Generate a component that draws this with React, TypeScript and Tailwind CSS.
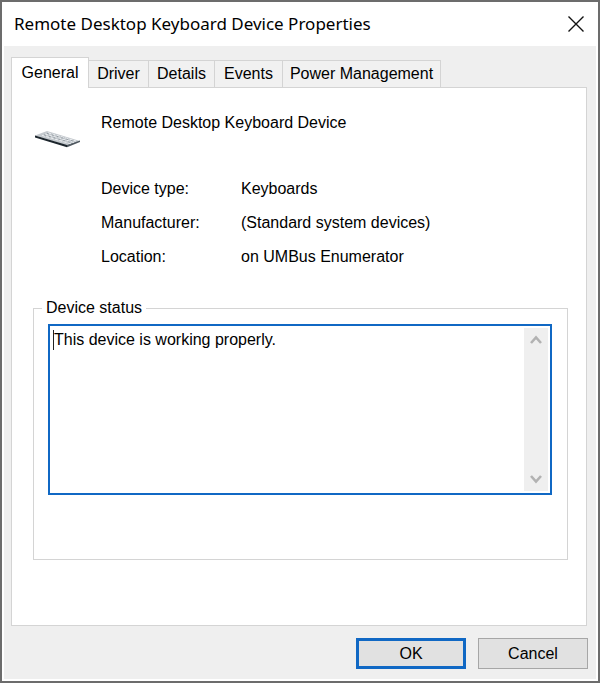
import React, { useState } from "react";

const tabs = [
  { name: "General", width: "w-[78px]" },
  { name: "Driver", width: "w-[60px]" },
  { name: "Details", width: "w-[66px]" },
  { name: "Events", width: "w-[68px]" },
  { name: "Power Management", width: "w-[158px]" },
];

const details = [
  { label: "Device type:", value: "Keyboards" },
  { label: "Manufacturer:", value: "(Standard system devices)" },
  { label: "Location:", value: "on UMBus Enumerator" },
];

function KeyboardIcon() {
  return (
    <svg width="46" height="17" viewBox="0 0 46 17" aria-hidden="true">
      <path d="M0 4.5 L12 0 L45 10 L32 14.5 Z" fill="#c4c9ce" />
      <path d="M0 4.5 L32 14 L32 16.2 L0 6.6 Z" fill="#1c252c" />
      <path d="M32 14 L45 9.5 L45 11 L32 16.2 Z" fill="#4d565e" />
      <path d="M7 4.3 L36 12.8M10 3 L39 11.5M13 1.8 L41 10" stroke="#eceff1" strokeWidth="1" strokeDasharray="3 1.5" />
      <path d="M9 3.8 L38 12.2M12 2.4 L40 10.6" stroke="#858e95" strokeWidth="0.8" strokeDasharray="2 3" />
    </svg>
  );
}

function Chevron({ down = false }: { down?: boolean }) {
  return (
    <svg width="12" height="10" viewBox="0 0 12 10" fill="none" stroke="#b2b2b2" strokeWidth="2.6" aria-hidden="true">
      <path d={down ? "M1 2 L6 7.5 L11 2" : "M1 8 L6 2.5 L11 8"} />
    </svg>
  );
}

export default function App() {
  const [active, setActive] = useState("General");

  return (
    <main className="flex min-h-screen flex-col border-2 border-[#6c6c6c] bg-white font-['Liberation_Sans',Arial,sans-serif] text-base leading-5 text-black">
      <header className="flex h-11 items-center justify-between px-3">
        <h1 className="font-['Noto_Sans','Open_Sans',sans-serif] text-[17px]">Remote Desktop Keyboard Device Properties</h1>
        <button type="button" aria-label="Close" className="flex size-5 items-center justify-center">
          <svg width="16" height="16" viewBox="0 0 16 16" stroke="#111" strokeWidth="1.4" aria-hidden="true">
            <path d="M0.5 0.5 L15.5 15.5 M15.5 0.5 L0.5 15.5" />
          </svg>
        </button>
      </header>

      <div className="flex flex-1 flex-col border-x-2 border-b-2 border-white bg-[#efefef] px-2 pb-[10px]">
        <div role="tablist" className="-mb-px ml-[-1px] flex h-[42px] items-end">
          {tabs.map((tab) => (
            <button
              key={tab.name}
              type="button"
              role="tab"
              aria-selected={active === tab.name}
              onClick={() => setActive(tab.name)}
              className={
                active === tab.name
                  ? `${tab.width} relative h-[31px] whitespace-nowrap border border-b-0 border-[#d4d4d4] bg-white`
                  : `${tab.width} h-7 whitespace-nowrap border border-l-0 border-[#d4d4d4] bg-[#f1f1f1]`
              }
            >
              {tab.name}
            </button>
          ))}
        </div>

        <section role="tabpanel" className="ml-[-1px] mr-px flex flex-1 flex-col border border-[#d4d4d4] bg-white px-[21px] pt-[25px]">
          <div className="flex pl-0.5">
            <div className="w-[66px] pt-[18px]">
              <KeyboardIcon />
            </div>
            <div>
              <h2>Remote Desktop Keyboard Device</h2>
              <dl className="mt-[46px] grid grid-cols-[140px_1fr] gap-y-[14px]">
                {details.map((item) => (
                  <React.Fragment key={item.label}>
                    <dt>{item.label}</dt>
                    <dd>{item.value}</dd>
                  </React.Fragment>
                ))}
              </dl>
            </div>
          </div>

          <fieldset className="mr-[-3px] mt-[31px] h-[262px] border border-[#d4d4d4] pl-[14px] pr-[15px]">
            <legend className="ml-[-6px] px-1">
              <label htmlFor="device-status">Device status</label>
            </legend>
            <div className="relative mt-[6px] flex h-[171px] border-2 border-[#1068c4] bg-white p-0.5">
              <textarea
                id="device-status"
                readOnly
                defaultValue="This device is working properly."
                className="flex-1 resize-none px-0.5 py-0.5 outline-none"
              />
              {/* text caret */}
              <span className="absolute left-[3px] top-1 h-5 w-px bg-[#222]" />
              <div className="flex w-6 flex-col items-center justify-between bg-[#efefef] py-[7px]">
                <button type="button" aria-label="Scroll up">
                  <Chevron />
                </button>
                <button type="button" aria-label="Scroll down">
                  <Chevron down />
                </button>
              </div>
            </div>
          </fieldset>
        </section>

        <footer className="mt-3 flex justify-end gap-3">
          <button type="button" className="h-[31px] w-[110px] border-[3px] border-[#1068c4] bg-[#e1e1e1]">
            OK
          </button>
          <button type="button" className="h-[31px] w-[110px] border border-[#a6a6a6] bg-[#e1e1e1]">
            Cancel
          </button>
        </footer>
      </div>
    </main>
  );
}
